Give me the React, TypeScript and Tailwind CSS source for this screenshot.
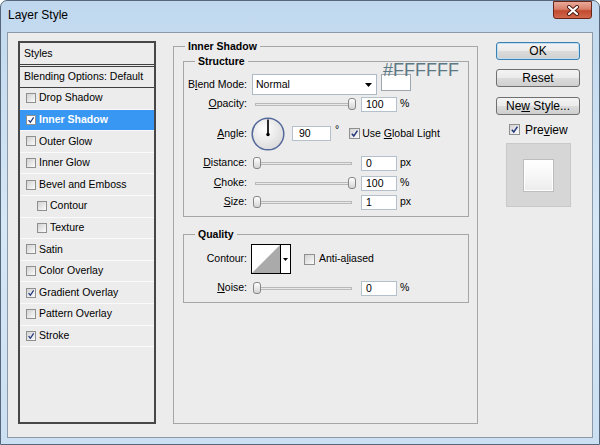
import React from "react";

// Photoshop "Layer Style" dialog, Vista frame

type Item = { label: string; checked?: boolean; active?: boolean; sub?: boolean };

const styleItems: Item[] = [
  { label: "Drop Shadow" },
  { label: "Inner Shadow", checked: true, active: true },
  { label: "Outer Glow" },
  { label: "Inner Glow" },
  { label: "Bevel and Emboss" },
  { label: "Contour", sub: true },
  { label: "Texture", sub: true },
  { label: "Satin" },
  { label: "Color Overlay" },
  { label: "Gradient Overlay", checked: true },
  { label: "Pattern Overlay" },
  { label: "Stroke", checked: true },
];

function CheckBox({ checked, white, small }: { checked?: boolean; white?: boolean; small?: boolean }) {
  return (
    <span
      className={`${small ? "w-[10px] h-[10px]" : "w-[11px] h-[11px]"} shrink-0 flex items-center justify-center border border-[#8e8f8f] ${
        white ? "bg-white" : "bg-linear-to-br from-[#d2d2d2] to-[#fbfbfb]"
      }`}
    >
      {checked && (
        <svg viewBox="0 0 10 10" className="w-full h-full">
          <path d="M2 5.2 L4.2 7.8 L8.3 1.8" fill="none" stroke="#22367c" strokeWidth="1.6" />
        </svg>
      )}
    </span>
  );
}

function Slider({ at }: { at: "start" | "end" }) {
  return (
    <div className="relative ml-[6px] w-[103px] h-[14px] flex items-center shrink-0">
      <div className="ml-[2px] mr-[4px] flex-1 h-[3px] border border-[#b9b9b9] bg-[#e8e8e8]" />
      {/* thumb */}
      <div
        className={`absolute top-[1px] ${at === "end" ? "right-0" : "left-0"} w-[8px] h-[12px] rounded-[3px] border border-[#868686] bg-linear-to-b from-white to-[#d4d4d4]`}
      />
    </div>
  );
}

function NumBox({ value }: { value: string }) {
  return (
    <div className="ml-[5px] w-[36px] h-[15px] shrink-0 bg-white border border-[#b4c0cc] pl-[4px] leading-[13px]">
      {value}
    </div>
  );
}

function Label({ children }: { children: React.ReactNode }) {
  return <span className="w-[63px] shrink-0 text-right">{children}</span>;
}

const btn =
  "w-[84px] h-[18px] rounded-[3px] border text-[12px] leading-[16px] text-center text-black bg-[linear-gradient(to_bottom,#f3f3f3_0%,#ebebeb_50%,#dcdcdc_50%,#cfcfcf_100%)]";

export default function App() {
  return (
    <div className="w-[600px] h-[445px] flex flex-col rounded-t-[7px] border border-[#56677b] bg-linear-to-b from-[#c0d8ee] via-[#d6e7f6] to-[#cce0f3] overflow-hidden font-['Liberation_Sans',Arial,sans-serif] text-black">
      {/* Title bar */}
      <div className="h-[31px] shrink-0 flex items-start justify-between">
        <span className="ml-[7px] mt-[7px] text-[12px] leading-[14px]">Layer Style</span>
        <div className="mr-[7px] w-[39px] h-[18px] rounded-b-[3px] border border-[#6b2418] bg-[linear-gradient(to_bottom,#e9aa9a_0%,#d8806a_45%,#c24a30_55%,#d0684c_100%)] flex items-center justify-center">
          <svg width="14" height="11" viewBox="0 0 14 11">
            <path d="M3 2 L11 9 M11 2 L3 9" stroke="#4a1a12" strokeWidth="4" strokeLinecap="round" />
            <path d="M3 2 L11 9 M11 2 L3 9" stroke="#ffffff" strokeWidth="2.2" strokeLinecap="round" />
          </svg>
        </div>
      </div>

      {/* Client area */}
      <div className="mx-[6px] mb-[6px] flex-1 border border-[#8c99a8] bg-[#ececec] text-[10.5px]">
        <div className="flex items-start pt-[6px] pl-[10px]">
          {/* Styles list */}
          <div className="mt-[2px] w-[138px] h-[383px] shrink-0 border-2 border-[#474747] bg-[#ececec]">
            <div className="h-[22px] flex items-center pl-[4px] border-b border-[#3f3f3f]">Styles</div>
            <div className="mt-[1px] h-[22px] flex items-center pl-[4px] border-y border-[#3f3f3f]">
              Blending Options: Default
            </div>
            {styleItems.map((it) => (
              <div
                key={it.label}
                className={`h-[21.6px] flex items-center border-b border-[#fafafa] ${it.sub ? "pl-[17px]" : "pl-[6px]"} ${
                  it.active ? "bg-[#3797f2] text-white font-bold" : ""
                }`}
              >
                <CheckBox small checked={it.checked} white={it.active} />
                <span className="ml-[3px]">{it.label}</span>
              </div>
            ))}
          </div>

          {/* Inner Shadow group */}
          <fieldset className="ml-[17px] w-[305px] h-[385px] shrink-0 border border-[#a6a6a6]">
            <legend className="ml-[11px] px-[3px] font-bold leading-[14px]">Inner Shadow</legend>

            <fieldset className="mt-[1px] ml-[9px] mr-[8px] pb-[6px] border border-[#a6a6a6]">
              <legend className="ml-[11px] px-[3px] font-bold leading-[14px]">Structure</legend>

              <div className="mt-[6px] flex items-start">
                <span className="w-[63px] shrink-0 text-right leading-[20px]">
                  B<u>l</u>end Mode:
                </span>
                <div className="ml-[5px] w-[125px] h-[21px] shrink-0 bg-white border border-[#adb9c6] flex items-center justify-between pl-[3px] pr-[4px]">
                  <span>Normal</span>
                  <svg width="7" height="4" viewBox="0 0 7 4">
                    <polygon points="0,0 7,0 3.5,4" fill="#000" />
                  </svg>
                </div>
                <div className="relative ml-[4px] w-[30px] h-[17px] shrink-0 bg-white border border-[#9ea6ae]">
                  <span className="absolute left-[1px] top-[-14px] text-[18px] leading-[18px] text-[#5b7884] whitespace-nowrap">
                    #FFFFFF
                  </span>
                </div>
              </div>

              <div className="mt-[1px] h-[16px] flex items-center">
                <Label>
                  <u>O</u>pacity:
                </Label>
                <Slider at="end" />
                <NumBox value="100" />
                <span className="ml-[3px]">%</span>
              </div>

              <div className="mt-[4px] h-[35px] flex items-center">
                <Label>
                  <u>A</u>ngle:
                </Label>
                <svg width="34" height="34" viewBox="0 0 34 34" className="ml-[4px] shrink-0">
                  <defs>
                    <radialGradient id="dial" cx="40%" cy="35%" r="70%">
                      <stop offset="0" stopColor="#ffffff" />
                      <stop offset="1" stopColor="#d9d9d9" />
                    </radialGradient>
                  </defs>
                  <circle cx="17" cy="17" r="15.8" fill="url(#dial)" stroke="#55699b" strokeWidth="1.5" />
                  <line x1="17" y1="17.5" x2="17" y2="2.5" stroke="#2b2b2b" strokeWidth="2" />
                  <circle cx="17" cy="17.5" r="1.7" fill="#000" />
                </svg>
                <div className="ml-[7px] w-[39px] h-[15px] shrink-0 bg-white border border-[#b4c0cc] pl-[6px] leading-[13px]">
                  90
                </div>
                <span className="ml-[4px] self-start mt-[8px] leading-[10px]">°</span>
                <span className="ml-[10px]">
                  <CheckBox checked />
                </span>
                <span className="ml-[2px]">
                  Use <u>G</u>lobal Light
                </span>
              </div>

              <div className="mt-[4px] h-[16px] flex items-center">
                <Label>
                  <u>D</u>istance:
                </Label>
                <Slider at="start" />
                <NumBox value="0" />
                <span className="ml-[3px]">px</span>
              </div>

              <div className="mt-[4px] h-[16px] flex items-center">
                <Label>
                  <u>C</u>hoke:
                </Label>
                <Slider at="end" />
                <NumBox value="100" />
                <span className="ml-[3px]">%</span>
              </div>

              <div className="mt-[3px] h-[16px] flex items-center">
                <Label>
                  <u>S</u>ize:
                </Label>
                <Slider at="start" />
                <NumBox value="1" />
                <span className="ml-[3px]">px</span>
              </div>
            </fieldset>

            <fieldset className="mt-[10px] ml-[9px] mr-[8px] pb-[6px] border border-[#a6a6a6]">
              <legend className="ml-[11px] px-[3px] font-bold leading-[14px]">Quality</legend>

              <div className="mt-[3px] h-[30px] flex items-center">
                <Label>Contour:</Label>
                <div className="ml-[4px] h-[30px] flex shrink-0 border border-black bg-white">
                  <svg width="28" height="28" viewBox="0 0 28 28">
                    <polygon points="0,28 28,0 28,28" fill="#aaaaaa" />
                  </svg>
                  <div className="w-[10px] border-l border-black flex items-center justify-center">
                    <svg width="5" height="3" viewBox="0 0 5 3">
                      <polygon points="0,0 5,0 2.5,3" fill="#000" />
                    </svg>
                  </div>
                </div>
                <span className="ml-[13px]">
                  <CheckBox />
                </span>
                <span className="ml-[4px]">
                  Anti-a<u>l</u>iased
                </span>
              </div>

              <div className="mt-[6px] h-[16px] flex items-center">
                <Label>
                  <u>N</u>oise:
                </Label>
                <Slider at="start" />
                <NumBox value="0" />
                <span className="ml-[3px]">%</span>
              </div>
            </fieldset>
          </fieldset>

          {/* Buttons and preview */}
          <div className="ml-[18px] mt-[3px] flex flex-col">
            <div className={`${btn} border-[#3c7fb1] shadow-[inset_0_0_0_1px_#bfe0f3]`}>OK</div>
            <div className={`${btn} mt-[9px] border-[#707070]`}>Reset</div>
            <div className={`${btn} mt-[10px] border-[#707070]`}>
              Ne<u>w</u> Style...
            </div>
            <div className="mt-[8px] pl-[13px] flex items-center h-[13px] text-[12px]">
              <CheckBox checked />
              <span className="ml-[5px]">
                Pre<u>v</u>iew
              </span>
            </div>
            <div className="mt-[7px] ml-[10px] w-[65px] h-[64px] border border-[#c9c9c9] bg-[#d6d6d6] flex items-center justify-center">
              <div className="w-[31px] h-[33px] border border-[#bdbdbd] bg-linear-to-b from-white via-[#f7f7f7] to-[#ebebeb] shadow-[inset_0_0_0_1px_#ffffff]" />
            </div>
          </div>
        </div>
      </div>
    </div>
  );
}
